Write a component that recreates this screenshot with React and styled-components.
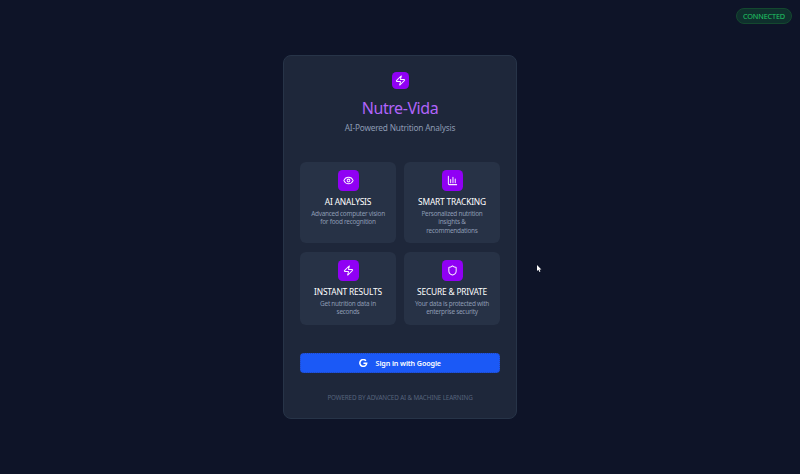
import React from "react";
import styled, { createGlobalStyle } from "styled-components";
import { Zap, Eye, Shield } from "lucide-react";

const GlobalStyle = createGlobalStyle`
  * { box-sizing: border-box; }
  body { margin: 0; overflow: hidden; background: #0d1226; }
`;

const Page = styled.main`
  position: relative;
  height: 474px;
  display: flex;
  justify-content: center;
  align-items: flex-start;
  padding-top: 55px;
  background: #0e1428;
  font-family: "Noto Sans", "Open Sans", sans-serif;
`;

const Status = styled.div`
  position: absolute;
  top: 8px;
  right: 8px;
  width: 56px;
  height: 16px;
  display: flex;
  align-items: center;
  justify-content: center;
  border: 1px solid #14482f;
  border-radius: 8px;
  background: #0f302d;
`;

const Card = styled.section`
  width: 234px;
  height: 364px;
  display: flex;
  flex-direction: column;
  align-items: center;
  padding: 16px 16px 0;
  border: 1px solid #273448;
  border-radius: 8px;
  background: #1e273a;
`;

const Line = styled.span`
  display: block;
  white-space: nowrap;
  font-size: ${(p) => p.$size}px;
  line-height: ${(p) => p.$height}px;
  letter-spacing: ${(p) => p.$spacing || 0}px;
  font-weight: ${(p) => p.$weight || 400};
  color: ${(p) => p.$color};
`;

const Tile = styled.div`
  width: ${(p) => p.$size}px;
  height: ${(p) => p.$size}px;
  flex: none;
  display: flex;
  align-items: center;
  justify-content: center;
  border-radius: 4.5px;
  background: #9000f4;
  color: #f8edff;
`;

const Header = styled.header`
  width: 113px;
  height: 90px;
  flex: none;
  display: flex;
  flex-direction: column;
  align-items: center;
`;

const Title = styled.h1`
  margin: 7px 0 0;
  font-weight: 400;
`;

const Features = styled.div`
  flex: none;
  display: grid;
  grid-template-columns: 96px 96px;
  grid-template-rows: 81px 73px;
  gap: 8px;
  row-gap: 8.5px;
`;

const Feature = styled.article`
  display: flex;
  flex-direction: column;
  align-items: center;
  padding-top: 8px;
  border-radius: 6px;
  background: #273246;
`;

const FeatureTitle = styled.h2`
  margin: 4px 0 2px;
  font-weight: 400;
`;

const SignIn = styled.button`
  width: 200px;
  height: 20px;
  margin: 28.5px 0 0;
  padding: 0;
  flex: none;
  display: flex;
  align-items: center;
  justify-content: center;
  gap: 8px;
  border: 1px dotted #2248be;
  border-radius: 4px;
  background: #1b59f6;
  font-family: inherit;
`;

const Footer = styled.footer`
  flex: none;
  margin-top: 19px;
`;

const Pointer = styled.svg`
  position: absolute;
  left: 536px;
  top: 264px;
`;

const ChartIcon = ({ size, strokeWidth }) => (
  <svg width={size} height={size} viewBox="0 0 24 24" fill="none" stroke="currentColor" strokeWidth={strokeWidth} strokeLinecap="round" strokeLinejoin="round">
    <path d="M3 3v16a2 2 0 0 0 2 2h16M8 17v-3M13 17V5M18 17V9M8 10v7" />
  </svg>
);

const GoogleIcon = () => (
  <svg width="8.5" height="8.5" viewBox="0 0 24 24" fill="none" stroke="#fff" strokeWidth="4.4">
    <path d="M19.5 5A9.6 9.6 0 1 0 21.7 12H12.5" />
  </svg>
);

const features = [
  { icon: Eye, title: "AI ANALYSIS", lines: ["Advanced computer vision", "for food recognition"] },
  { icon: ChartIcon, title: "SMART TRACKING", lines: ["Personalized nutrition", "insights &", "recommendations"] },
  { icon: Zap, title: "INSTANT RESULTS", lines: ["Get nutrition data in", "seconds"] },
  { icon: Shield, title: "SECURE & PRIVATE", lines: ["Your data is protected with", "enterprise security"] },
];

export default function App() {
  return (
    <Page>
      <GlobalStyle />
      <Status>
        <Line $size={7.3} $height={14} $spacing={-0.15} $color="#20c866">CONNECTED</Line>
      </Status>
      <Card>
        <Header>
          <Tile $size={17}><Zap size={11} strokeWidth={2.2} /></Tile>
          <Title><Line $size={16} $height={24} $spacing={-0.43} $color="#b164fa">Nutre-Vida</Line></Title>
          <Line $size={8.3} $height={15} $spacing={-0.19} $color="#8c9ab2">AI-Powered Nutrition Analysis</Line>
        </Header>
        <Features>
          {features.map(({ icon: Icon, title, lines }) => (
            <Feature key={title}>
              <Tile $size={21}><Icon size={11} strokeWidth={2.2} /></Tile>
              <FeatureTitle>
                <Line $size={8.4} $height={13} $spacing={-0.18} $color="#fff">{title}</Line>
              </FeatureTitle>
              {lines.map((text) => (
                <Line key={text} $size={6.4} $height={8.4} $spacing={-0.24} $color="#8d9bb3">{text}</Line>
              ))}
            </Feature>
          ))}
        </Features>
        <SignIn>
          <GoogleIcon />
          <Line $size={7.2} $height={17} $weight={600} $spacing={-0.12} $color="#fff">Sign in with Google</Line>
        </SignIn>
        <Footer>
          <Line $size={6.3} $height={11} $spacing={-0.14} $color="#56637c">POWERED BY ADVANCED AI &amp; MACHINE LEARNING</Line>
        </Footer>
      </Card>
      <Pointer width="6" height="9" viewBox="0 0 6 9">
        <path d="M1 1v6l1.4-1.2L3.4 8l1-.5-.9-2H5.4Z" fill="#fff" />
      </Pointer>
    </Page>
  );
}
